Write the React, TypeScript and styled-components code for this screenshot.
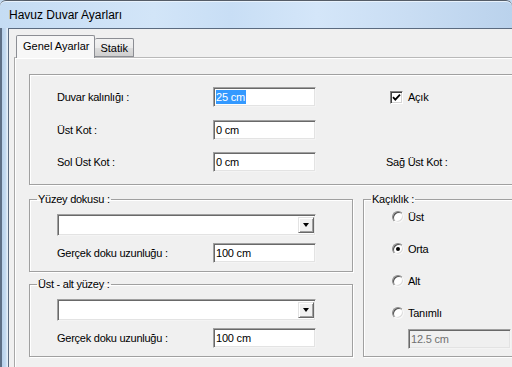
import styled, { createGlobalStyle } from "styled-components";

const GlobalStyle = createGlobalStyle`
  html, body {
    margin: 0;
    padding: 0;
  }
  body {
    width: 512px;
    height: 367px;
    overflow: hidden;
    background: #f0f0f0;
    font-family: "Liberation Sans", Arial, sans-serif;
    color: #000;
  }
`;

const Window = styled.div`
  width: 512px;
  height: 367px;
  display: flex;
  flex-direction: column;
  overflow: hidden;
  background: #c2d9f0;
`;

const TitleBar = styled.div`
  flex: none;
  height: 27px;
  display: flex;
  align-items: center;
  padding-left: 9px;
  border-top: 1px solid #555d68;
  border-radius: 6px 6px 0 0;
  background: linear-gradient(
    90deg,
    #c5dcf3 0%,
    #d2e5f8 30%,
    #c8def5 45%,
    #d4e6f9 62%,
    #c9ddf3 80%,
    #bad2ec 100%
  );
  box-shadow: inset 0 1px 0 #e8f2fc;
  font-size: 12px;
`;

const Body = styled.div`
  flex: 1;
  display: flex;
  min-height: 0;
`;

const Frame = styled.div`
  flex: none;
  width: 8px;
  background: linear-gradient(90deg, #5d6f86 0, #5d6f86 2px, #b7d0ea 2px, #c6dcf2 6px, #e4eef8 7px);
`;

const Client = styled.div`
  flex: 1;
  display: flex;
  flex-direction: column;
  border-top: 1px solid #5b6b80;
  border-left: 1px solid #5b6b80;
  background: #f0f0f0;
  padding: 6px 0 0 6px;
  min-width: 0;
`;

const TabStrip = styled.div`
  display: flex;
  align-items: flex-end;
  height: 22px;
  padding-left: 1px;
  position: relative;
  z-index: 1;
`;

const Tab = styled.div<{ $active?: boolean }>`
  box-sizing: border-box;
  height: ${(p) => (p.$active ? "23px" : "19px")};
  margin-bottom: ${(p) => (p.$active ? "-1px" : "0")};
  padding: ${(p) => (p.$active ? "3px 5px 0 6px" : "2px 5px 0 5px")};
  border: 1px solid #8c8e94;
  border-bottom: ${(p) => (p.$active ? "none" : "1px solid #8c8e94")};
  border-left: ${(p) => (p.$active ? "1px solid #8c8e94" : "none")};
  border-radius: 2px 2px 0 0;
  background: ${(p) =>
    p.$active
      ? "#f7f7f7"
      : "linear-gradient(180deg, #f2f2f2 0%, #ebebeb 50%, #dddddd 51%, #cfcfcf 100%)"};
  font-size: 11px;
  line-height: 15px;
  white-space: nowrap;
`;

const TabPanel = styled.div`
  flex: 1;
  border-top: 1px solid #b9b9b9;
  border-left: 1px solid #a7a7a7;
  box-shadow: inset 1px 1px 0 #ffffff;
  background: #f0f0f0;
  padding: 16px 0 0 14px;
  margin-left: -1px;
`;

const MainGroup = styled.div`
  width: 520px;
  box-sizing: border-box;
  border: 1px solid #a0a0a0;
  box-shadow: inset 1px 1px 0 #fff, 1px 1px 0 #fff;
  padding: 12px 0 12px 27px;
  display: grid;
  grid-template-columns: 156px 103px 1fr;
  grid-template-rows: 20px 20px 20px;
  row-gap: 12.5px;
  align-items: center;
`;

const Label = styled.span`
  font-size: 11px;
  letter-spacing: -0.25px;
  white-space: nowrap;
`;

const RightCell = styled.div`
  display: flex;
  align-items: center;
  padding-left: 70px;
  font-size: 11px;
  letter-spacing: -0.25px;
`;

const TextBox = styled.div<{ $disabled?: boolean }>`
  width: 103px;
  height: 20px;
  box-sizing: border-box;
  background: ${(p) => (p.$disabled ? "#f0f0f0" : "#fff")};
  border: 1px solid;
  border-color: #a0a0a0 #f4f4f4 #f4f4f4 #a0a0a0;
  box-shadow: inset 1px 1px 0 #696969, inset -1px -1px 0 #e3e3e3;
  padding: 0 2px;
  display: flex;
  align-items: center;
  font-size: 11px;
  letter-spacing: -0.2px;
  color: ${(p) => (p.$disabled ? "#707070" : "#000")};
  white-space: nowrap;
`;

const Selected = styled.span`
  background: #3399ff;
  color: #fff;
  line-height: 14px;
  padding-right: 1px;
`;

const CheckBox = styled.span`
  width: 13px;
  height: 13px;
  box-sizing: border-box;
  margin-left: 4px;
  margin-right: 5px;
  background: #fff;
  border: 1px solid;
  border-color: #808080 #fff #fff #808080;
  box-shadow: inset 1px 1px 0 #404040, inset -1px -1px 0 #d4d4d4;
  display: flex;
  align-items: center;
  justify-content: center;
`;

const BottomRow = styled.div`
  width: 520px;
  display: flex;
  gap: 10px;
  margin-top: 8px;
`;

const LeftColumn = styled.div`
  width: 324px;
  display: flex;
  flex-direction: column;
  gap: 6px;
`;

const GroupBox = styled.fieldset<{ $grow?: boolean }>`
  margin: 0;
  padding: 0;
  min-width: 0;
  flex: ${(p) => (p.$grow ? "1" : "none")};
  border: 1px solid #a0a0a0;
  box-shadow: inset 1px 1px 0 #fff, 1px 1px 0 #fff;
`;

const Legend = styled.legend`
  margin-left: 7px;
  padding: 0 1px;
  font-size: 11px;
  line-height: 12px;
  letter-spacing: -0.25px;
`;

const GroupInner = styled.div`
  padding: 9px 0 8px 27px;
  display: flex;
  flex-direction: column;
  gap: 7px;
`;

const Combo = styled.div`
  width: 259px;
  height: 22px;
  box-sizing: border-box;
  background: #fff;
  border: 1px solid;
  border-color: #a0a0a0 #f4f4f4 #f4f4f4 #a0a0a0;
  box-shadow: inset 1px 1px 0 #696969, inset -1px -1px 0 #e3e3e3;
  padding: 2px 1px 2px 2px;
  display: flex;
  justify-content: flex-end;
`;

const DropButton = styled.div`
  width: 16px;
  height: 100%;
  box-sizing: border-box;
  background: #f0f0f0;
  border: 1px solid;
  border-color: #e3e3e3 #696969 #696969 #e3e3e3;
  box-shadow: inset 1px 1px 0 #fff, inset -1px -1px 0 #a0a0a0;
  display: flex;
  align-items: center;
  justify-content: center;
`;

const Arrow = styled.span`
  width: 0;
  height: 0;
  border-left: 3.5px solid transparent;
  border-right: 3.5px solid transparent;
  border-top: 4px solid #000;
`;

const FieldRow = styled.div`
  display: flex;
  align-items: center;
  height: 20px;
`;

const FieldLabel = styled(Label)`
  width: 156px;
`;

const RadioList = styled.div`
  padding: 4px 0 0 28px;
  display: flex;
  flex-direction: column;
  gap: 16px;
`;

const RadioRow = styled.div`
  display: flex;
  align-items: center;
  height: 16px;
  font-size: 11px;
  letter-spacing: -0.25px;
`;

const RadioCircle = styled.span<{ $checked?: boolean }>`
  width: 12px;
  height: 12px;
  box-sizing: border-box;
  margin-right: 4px;
  border-radius: 50%;
  background: #fff;
  border: 1px solid;
  border-color: #8a8a8a #f8f8f8 #f8f8f8 #8a8a8a;
  box-shadow: inset 1px 1px 0 #505050, inset -1px -1px 0 #dcdcdc;
  display: flex;
  align-items: center;
  justify-content: center;
  &::after {
    content: "";
    width: 4px;
    height: 4px;
    border-radius: 50%;
    background: #000;
    display: ${(p) => (p.$checked ? "block" : "none")};
  }
`;

const DisabledWrap = styled.div`
  padding: 8px 0 0 44px;
`;

export default function App() {
  return (
    <>
      <GlobalStyle />
      <Window>
        <TitleBar>Havuz Duvar Ayarları</TitleBar>
        <Body>
          <Frame />
          <Client>
            <TabStrip>
              <Tab $active>Genel Ayarlar</Tab>
              <Tab>Statik</Tab>
            </TabStrip>
            <TabPanel>
              <MainGroup>
                <Label>Duvar kalınlığı :</Label>
                <TextBox>
                  <Selected>25 cm</Selected>
                </TextBox>
                <RightCell>
                  <CheckBox>
                    <svg width="9" height="9" viewBox="0 0 9 9">
                      <path d="M1 4.2 L3.3 6.6 L8 1.6" fill="none" stroke="#000" strokeWidth="1.8" />
                    </svg>
                  </CheckBox>
                  Açık
                </RightCell>
                <Label>Üst Kot :</Label>
                <TextBox>0 cm</TextBox>
                <RightCell />
                <Label>Sol Üst Kot :</Label>
                <TextBox>0 cm</TextBox>
                <RightCell>Sağ Üst Kot :</RightCell>
              </MainGroup>
              <BottomRow>
                <LeftColumn>
                  <GroupBox>
                    <Legend>Yüzey dokusu :</Legend>
                    <GroupInner>
                      <Combo>
                        <DropButton>
                          <Arrow />
                        </DropButton>
                      </Combo>
                      <FieldRow>
                        <FieldLabel>Gerçek doku uzunluğu :</FieldLabel>
                        <TextBox>100 cm</TextBox>
                      </FieldRow>
                    </GroupInner>
                  </GroupBox>
                  <GroupBox>
                    <Legend>Üst - alt yüzey :</Legend>
                    <GroupInner>
                      <Combo>
                        <DropButton>
                          <Arrow />
                        </DropButton>
                      </Combo>
                      <FieldRow>
                        <FieldLabel>Gerçek doku uzunluğu :</FieldLabel>
                        <TextBox>100 cm</TextBox>
                      </FieldRow>
                    </GroupInner>
                  </GroupBox>
                </LeftColumn>
                <GroupBox $grow>
                  <Legend>Kaçıklık :</Legend>
                  <RadioList>
                    <RadioRow>
                      <RadioCircle />
                      Üst
                    </RadioRow>
                    <RadioRow>
                      <RadioCircle $checked />
                      Orta
                    </RadioRow>
                    <RadioRow>
                      <RadioCircle />
                      Alt
                    </RadioRow>
                    <RadioRow>
                      <RadioCircle />
                      Tanımlı
                    </RadioRow>
                  </RadioList>
                  <DisabledWrap>
                    <TextBox $disabled>12.5 cm</TextBox>
                  </DisabledWrap>
                </GroupBox>
              </BottomRow>
            </TabPanel>
          </Client>
        </Body>
      </Window>
    </>
  );
}
